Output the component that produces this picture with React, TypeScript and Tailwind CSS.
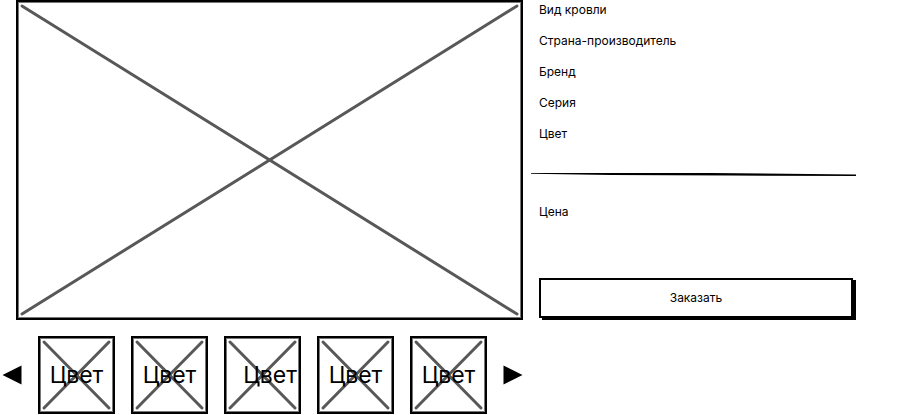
type Align = "center" | "end";

const details = ["Вид кровли", "Страна-производитель", "Бренд", "Серия", "Цвет"];

const swatches: { id: number; align: Align }[] = [
  { id: 1, align: "center" },
  { id: 2, align: "center" },
  { id: 3, align: "end" },
  { id: 4, align: "center" },
  { id: 5, align: "center" },
];

function Cross() {
  return (
    <svg className="h-full w-full overflow-visible" aria-hidden="true" stroke="#585858" strokeWidth="3" strokeLinecap="round">
      <line x1="0" y1="0" x2="100%" y2="100%" />
      <line x1="100%" y1="0" x2="0" y2="100%" />
    </svg>
  );
}

function Swatch({ align }: { align: Align }) {
  return (
    <button
      type="button"
      className="grid h-[78px] w-[77px] border-2 border-black shadow-[inset_0_0_0_1px_#777777]"
    >
      <span className="col-start-1 row-start-1 h-[74px] p-1">
        <Cross />
      </span>
      <span
        className={`col-start-1 row-start-1 self-center text-[23px] leading-6 ${
          align === "end" ? "justify-self-end pr-0.5" : "justify-self-center"
        }`}
      >
        Цвет
      </span>
    </button>
  );
}

function Arrow({ direction }: { direction: "left" | "right" }) {
  return (
    <button type="button" aria-label={direction === "left" ? "Назад" : "Вперёд"} className="shrink-0">
      <svg width="20" height="20" viewBox="0 0 20 20" aria-hidden="true">
        <path d={direction === "left" ? "M0.5 10 L19.5 0.5 V19.5 Z" : "M19.5 10 L0.5 0.5 V19.5 Z"} />
      </svg>
    </button>
  );
}

export default function App() {
  return (
    <main className="grid grid-cols-[523fr_333fr] bg-white pr-[45px] font-['Inter','Liberation_Sans',sans-serif] text-black">
      <section>
        <div className="ml-4 h-80 border-2 border-black p-1 shadow-[inset_0_0_0_1px_#777777]">
          <Cross />
        </div>
        <div className="mt-4 flex items-center justify-between pl-0.5">
          <Arrow direction="left" />
          <div className="flex gap-4">
            {swatches.map((s) => (
              <Swatch key={s.id} align={s.align} />
            ))}
          </div>
          <Arrow direction="right" />
        </div>
      </section>

      <section className="pl-2">
        <ul className="flex flex-col gap-[11px] pl-2 text-[12px] leading-5">
          {details.map((d) => (
            <li key={d}>{d}</li>
          ))}
        </ul>
        <svg className="mt-7 block h-1 w-full" viewBox="0 0 326 4" preserveAspectRatio="none" aria-hidden="true">
          <path d="M0 1 L180 1 L326 2.6 V4 L200 3.6 L80 3 L0 1.8 Z" />
        </svg>
        <p className="mt-[26px] pl-2 text-[12px] leading-5">Цена</p>
        <div className="mt-14 pr-[3px] pl-2">
          <button
            type="button"
            className="h-10 w-full border-2 border-black text-[12px] leading-5 shadow-[3px_2px_0_0_#000000]"
          >
            Заказать
          </button>
        </div>
      </section>
    </main>
  );
}
